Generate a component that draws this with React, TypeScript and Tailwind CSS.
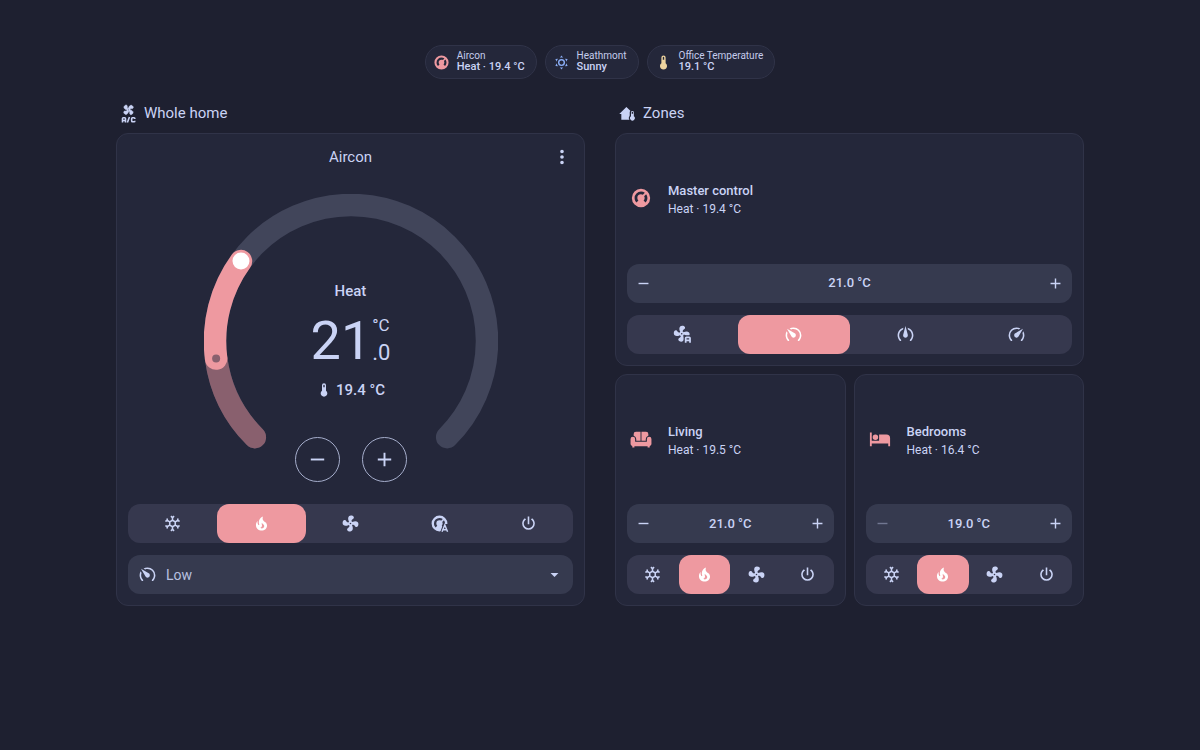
import type { ReactNode } from "react";
import clsx from "clsx";

const FAN =
  "M12,11A1,1 0 0,0 11,12A1,1 0 0,0 12,13A1,1 0 0,0 13,12A1,1 0 0,0 12,11M12.5,2C17,2 17.11,5.57 14.75,6.75C13.76,7.24 13.32,8.29 13.13,9.22C13.61,9.42 14.03,9.73 14.35,10.13C18.05,8.13 22.03,8.92 22.03,12.5C22.03,17 18.46,17.1 17.28,14.73C16.78,13.74 15.72,13.3 14.79,13.11C14.59,13.59 14.28,14 13.88,14.34C15.87,18.03 15.08,22 11.5,22C7,22 6.91,18.42 9.27,17.24C10.25,16.75 10.69,15.71 10.89,14.79C10.4,14.59 9.97,14.27 9.65,13.87C5.96,15.85 2,15.07 2,11.5C2,7 5.56,6.89 6.74,9.26C7.24,10.25 8.29,10.68 9.22,10.87C9.41,10.39 9.73,9.97 10.14,9.65C8.15,5.96 8.94,2 12.5,2Z";

const THERMOSTAT =
  "M16.95,16.95L14.83,14.83C15.55,14.1 16,13.1 16,12C16,11.26 15.79,10.57 15.43,10L17.6,7.81C18.5,9 19,10.43 19,12C19,13.93 18.22,15.68 16.95,16.95M12,5C13.57,5 15,5.5 16.19,6.4L14,8.56C13.43,8.21 12.74,8 12,8A4,4 0 0,0 8,12C8,13.1 8.45,14.1 9.17,14.83L7.05,16.95C5.78,15.68 5,13.93 5,12A7,7 0 0,1 12,5M12,2A10,10 0 0,0 2,12A10,10 0 0,0 12,22A10,10 0 0,0 22,12A10,10 0 0,0 12,2Z";

const SPEEDOMETER =
  "M12,16A3,3 0 0,1 9,13C9,11.88 9.61,10.9 10.5,10.39L20.21,4.77L14.68,14.35C14.18,15.33 13.17,16 12,16M12,3C13.81,3 15.5,3.5 16.97,4.32L14.87,5.53C14,5.19 13,5 12,5A8,8 0 0,0 4,13C4,15.21 4.89,17.21 6.34,18.65H6.35C6.74,19.04 6.74,19.67 6.35,20.06C5.96,20.45 5.32,20.45 4.93,20.07V20.07C3.12,18.26 2,15.76 2,13A10,10 0 0,1 12,3M22,13C22,15.76 20.88,18.26 19.07,20.07V20.07C18.68,20.45 18.05,20.45 17.66,20.06C17.27,19.67 17.27,19.04 17.66,18.65V18.65C19.11,17.2 20,15.21 20,13C20,12 19.81,11 19.46,10.1L20.67,8C21.5,9.5 22,11.18 22,13Z";

const paths = {
  minus: "M19,13H5V11H19V13Z",
  plus: "M19,13H13V19H11V13H5V11H11V5H13V11H19V13Z",
  dots: "M12,16A2,2 0 0,1 14,18A2,2 0 0,1 12,20A2,2 0 0,1 10,18A2,2 0 0,1 12,16M12,10A2,2 0 0,1 14,12A2,2 0 0,1 12,14A2,2 0 0,1 10,12A2,2 0 0,1 12,10M12,4A2,2 0 0,1 14,6A2,2 0 0,1 12,8A2,2 0 0,1 10,6A2,2 0 0,1 12,4Z",
  caret: "M7,10L12,15L17,10H7Z",
  cool: "M20.79,13.95L18.46,14.57L16.46,13.44V10.56L18.46,9.43L20.79,10.05L21.31,8.12L19.54,7.65L20,5.88L18.07,5.36L17.45,7.69L15.45,8.82L13,7.38V5.12L14.71,3.41L13.29,2L12,3.29L10.71,2L9.29,3.41L11,5.12V7.38L8.5,8.82L6.5,7.69L5.92,5.36L4,5.88L4.47,7.65L2.7,8.12L3.22,10.05L5.55,9.43L7.55,10.56V13.45L5.55,14.58L3.22,13.96L2.7,15.89L4.47,16.36L4,18.12L5.93,18.64L6.55,16.31L8.55,15.18L11,16.62V18.88L9.29,20.59L10.71,22L12,20.71L13.29,22L14.7,20.59L13,18.88V16.62L15.5,15.17L17.5,16.3L18.12,18.63L20,18.12L19.53,16.35L21.3,15.88L20.79,13.95M9.5,10.56L12,9.11L14.5,10.56V13.44L12,14.89L9.5,13.44V10.56Z",
  heat: "M17.66 11.2C17.43 10.9 17.15 10.64 16.89 10.38C16.22 9.78 15.46 9.35 14.82 8.72C13.33 7.26 13 4.85 13.95 3C13 3.23 12.17 3.75 11.46 4.32C8.87 6.4 7.85 10.07 9.07 13.22C9.11 13.32 9.15 13.42 9.15 13.55C9.15 13.77 9 13.97 8.8 14.05C8.57 14.15 8.33 14.09 8.14 13.93C8.08 13.88 8.04 13.83 8 13.76C6.87 12.33 6.69 10.28 7.45 8.64C5.78 10 4.87 12.3 5 14.47C5.06 14.97 5.12 15.47 5.29 15.97C5.43 16.57 5.7 17.17 6 17.7C7.08 19.43 8.95 20.67 10.96 20.92C13.1 21.19 15.39 20.8 17.03 19.32C18.86 17.66 19.5 15 18.56 12.72L18.43 12.46C18.22 12 17.66 11.2 17.66 11.2M14.5 17.5C14.22 17.74 13.76 18 13.4 18.1C12.28 18.5 11.16 17.94 10.5 17.28C11.69 17 12.4 16.12 12.61 15.23C12.78 14.43 12.46 13.77 12.33 13C12.21 12.26 12.23 11.63 12.5 10.94C12.69 11.32 12.89 11.7 13.13 12C13.9 13 15.11 13.44 15.37 14.8C15.41 14.94 15.43 15.08 15.43 15.23C15.46 16.05 15.1 16.95 14.5 17.5H14.5Z",
  fan: FAN,
  power:
    "M16.56,5.44L15.11,6.89C16.84,7.94 18,9.83 18,12A6,6 0 0,1 12,18A6,6 0 0,1 6,12C6,9.83 7.16,7.94 8.88,6.88L7.44,5.44C5.36,6.88 4,9.28 4,12A8,8 0 0,0 12,20A8,8 0 0,0 20,12C20,9.28 18.64,6.88 16.56,5.44M13,3H11V13H13",
  thermometer:
    "M15 13V5A3 3 0 0 0 9 5V13A5 5 0 1 0 15 13M12 4A1 1 0 0 1 13 5V8H11V5A1 1 0 0 1 12 4Z",
  bed: "M19,7H11V14H3V5H1V20H3V17H21V20H23V11A4,4 0 0,0 19,7M7,13A3,3 0 0,0 10,10A3,3 0 0,0 7,7A3,3 0 0,0 4,10A3,3 0 0,0 7,13Z",
  sun: "M12,7A5,5 0 0,1 17,12A5,5 0 0,1 12,17A5,5 0 0,1 7,12A5,5 0 0,1 12,7M12,9A3,3 0 0,0 9,12A3,3 0 0,0 12,15A3,3 0 0,0 15,12A3,3 0 0,0 12,9M12,2L14.39,5.42C13.65,5.15 12.84,5 12,5C11.16,5 10.35,5.15 9.61,5.42L12,2M3.34,7L7.5,6.65C6.9,7.16 6.36,7.78 5.94,8.5C5.5,9.24 5.25,10 5.11,10.79L3.34,7M3.36,17L5.12,13.23C5.26,14 5.53,14.78 5.95,15.5C6.37,16.24 6.91,16.86 7.5,17.37L3.36,17M20.65,7L18.88,10.79C18.74,10 18.47,9.23 18.05,8.5C17.63,7.78 17.1,7.15 16.5,6.64L20.65,7M20.64,17L16.5,17.36C17.09,16.85 17.62,16.22 18.04,15.5C18.46,14.77 18.73,14 18.87,13.21L20.64,17M12,22L9.59,18.56C10.33,18.83 11.14,19 12,19C12.82,19 13.63,18.83 14.37,18.56L12,22Z",
  thermostat: THERMOSTAT,
  fanHigh: SPEEDOMETER,
  fanMedium:
    "M12 1.38L9.14 12.06C8.8 13.1 9.04 14.29 9.86 15.12C11.04 16.29 12.94 16.29 14.11 15.12C14.9 14.33 15.16 13.2 14.89 12.21M14.6 3.35L15.22 5.68C18.04 6.92 20 9.73 20 13C20 15.21 19.11 17.21 17.66 18.65H17.65C17.26 19.04 17.26 19.67 17.65 20.06C18.04 20.45 18.68 20.45 19.07 20.07C20.88 18.26 22 15.76 22 13C22 8.38 18.86 4.5 14.6 3.35M9.4 3.36C5.15 4.5 2 8.4 2 13C2 15.76 3.12 18.26 4.93 20.07C5.32 20.45 5.95 20.45 6.34 20.06C6.73 19.67 6.73 19.04 6.34 18.65C4.89 17.2 4 15.21 4 13C4 9.65 5.94 6.86 8.79 5.65",
  sofa: "M6.5,4H11.5V13.8H6.8V12A3.9,3.9 0 0,0 4,8.4V6.5A2.5,2.5 0 0,1 6.5,4M12.5,4H17.5A2.5,2.5 0 0,1 20,6.5V8.4A3.9,3.9 0 0,0 17.2,12V13.8H12.5V4M3.1,9.5A2.5,2.5 0 0,1 5.6,12V15H18.4V12A2.5,2.5 0 0,1 23.4,12V17.5A2.3,2.3 0 0,1 21.5,19.7V21.3H19.2V20H4.8V21.3H2.5V19.7A2.3,2.3 0 0,1 .6,17.5V12A2.5,2.5 0 0,1 3.1,9.5Z",
};

type PathName = keyof typeof paths;

function Svg({ className, children }: { className: string; children: ReactNode }) {
  return (
    <svg viewBox="0 0 24 24" fill="currentColor" aria-hidden="true" className={clsx("shrink-0", className)}>
      {children}
    </svg>
  );
}

function Icon({ name, className = "size-[19px]" }: { name: PathName; className?: string }) {
  return (
    <Svg className={className}>
      <path d={paths[name]} />
    </Svg>
  );
}

function SlowIcon() {
  return (
    <Svg className="size-[19px]">
      <path d={SPEEDOMETER} transform="matrix(-1 0 0 1 24 0)" />
    </Svg>
  );
}

function FanAutoIcon() {
  return (
    <Svg className="size-[19px]">
      <mask id="fan-auto">
        <rect width="24" height="24" fill="white" />
        <path d="M14.4,24V15.5A1.5,1.5 0 0,1 15.9,14H24V24Z" fill="black" />
      </mask>
      <path d={FAN} mask="url(#fan-auto)" transform="translate(-1 -1)" />
      <path
        d="M16,22.5V16.5A1,1 0 0,1 17,15.5H20.5A1,1 0 0,1 21.5,16.5V22.5M16,19.5H21.5"
        fill="none"
        stroke="currentColor"
        strokeWidth="2.2"
      />
    </Svg>
  );
}

function ThermostatAutoIcon() {
  return (
    <Svg className="size-[19px]">
      <mask id="thermostat-auto">
        <rect width="24" height="24" fill="white" />
        <path d="M12.5,24L16.6,12.5H24V24Z" fill="black" />
      </mask>
      <path d={THERMOSTAT} mask="url(#thermostat-auto)" />
      <path d="M15.2,22.5L18.7,13.8L22.2,22.5M16.4,19.8H21" fill="none" stroke="currentColor" strokeWidth="1.8" />
    </Svg>
  );
}

function AirConIcon() {
  return (
    <Svg className="size-[19px]">
      <path
        d={FAN}
        stroke="currentColor"
        strokeWidth="1"
        transform="translate(12 7.4) rotate(40) scale(.7) translate(-12 -12)"
      />
      <path
        d="M4.4,23.4V18.4A1,1 0 0,1 5.4,17.4H7.2A1,1 0 0,1 8.2,18.4V23.4M4.4,20.8H8.2M10.6,23.4L13.2,16.4M20,18.8V18.4A1,1 0 0,0 19,17.4H17A1,1 0 0,0 16,18.4V21.4A1,1 0 0,0 17,22.4H19A1,1 0 0,0 20,21.4V21"
        fill="none"
        stroke="currentColor"
        strokeWidth="2"
      />
    </Svg>
  );
}

function HomeThermometerIcon() {
  return (
    <Svg className="size-[19px]">
      <path d="M1.6,12.6L10.6,3.8L15.6,8.4A3.4,3.4 0 0,0 14.8,11V14.6A5,5 0 0,0 14.4,20H4.2V12.6Z" />
      <path d="M20,15.6V10.6A1.8,1.8 0 0,0 16.4,10.6V15.6A3,3 0 1,0 20,15.6M18.2,9.8A.9,.9 0 0,1 19.1,10.7V12.4H17.3V10.7A.9,.9 0 0,1 18.2,9.8Z" />
    </Svg>
  );
}

function Chip({ icon, title, value }: { icon: ReactNode; title: string; value: string }) {
  return (
    <button
      type="button"
      className="flex h-[34px] items-center gap-[7px] rounded-full border border-[#303348] bg-[#24273a] pr-[11px] pl-[7px] text-left"
    >
      {icon}
      <span className="flex flex-col pb-0.5">
        <span className="text-[10px] leading-[11px] text-[#c4ccec]">{title}</span>
        <span className="text-[11px] leading-3 font-medium">{value}</span>
      </span>
    </button>
  );
}

type Option = { label: string; icon: ReactNode };

function Segments({ label, options, active }: { label: string; options: Option[]; active: string }) {
  return (
    <div role="group" aria-label={label} className="flex h-[39px] rounded-xl bg-[#36384e]">
      {options.map((option) => {
        const selected = option.label === active;
        return (
          <button
            key={option.label}
            type="button"
            aria-label={option.label}
            aria-pressed={selected}
            className={clsx("flex flex-1 items-center justify-center rounded-xl", selected && "bg-[#ee99a0] text-white")}
          >
            {option.icon}
          </button>
        );
      })}
    </div>
  );
}

function Stepper({ value, atMin = false }: { value: string; atMin?: boolean }) {
  return (
    <div className="flex h-[39px] items-center justify-between rounded-xl bg-[#363a4f]">
      <button
        type="button"
        aria-label="Decrease"
        disabled={atMin}
        className="flex h-full w-[33px] items-center justify-center disabled:opacity-40"
      >
        <Icon name="minus" className="size-[17px]" />
      </button>
      <span className="text-[13px] leading-5 font-medium">{value}</span>
      <button type="button" aria-label="Increase" className="flex h-full w-[33px] items-center justify-center">
        <Icon name="plus" className="size-[17px]" />
      </button>
    </div>
  );
}

function Tile({
  icon,
  title,
  state,
  className,
  children,
}: {
  icon: PathName;
  title: string;
  state: string;
  className?: string;
  children: ReactNode;
}) {
  return (
    <section
      className={clsx("flex flex-col gap-3 rounded-xl border border-[#303348] bg-[#24273a] p-[11px]", className)}
    >
      <div className="flex flex-1 items-center gap-4 pl-[3px]">
        <Icon name={icon} className="size-[22px] text-[#ee99a0]" />
        <div className="pt-1">
          <h3 className="text-[13px] leading-[18px] font-medium">{title}</h3>
          <p className="text-xs leading-[18px]">{state}</p>
        </div>
      </div>
      {children}
    </section>
  );
}

const roomModes: Option[] = [
  { label: "Cool", icon: <Icon name="cool" /> },
  { label: "Heat", icon: <Icon name="heat" /> },
  { label: "Fan only", icon: <Icon name="fan" /> },
  { label: "Off", icon: <Icon name="power" /> },
];

const homeModes: Option[] = [
  ...roomModes.slice(0, 3),
  { label: "Heat/Cool", icon: <ThermostatAutoIcon /> },
  roomModes[3],
];

const fanModes: Option[] = [
  { label: "Auto", icon: <FanAutoIcon /> },
  { label: "Low", icon: <SlowIcon /> },
  { label: "Medium", icon: <Icon name="fanMedium" /> },
  { label: "High", icon: <Icon name="fanHigh" /> },
];

// point on the dial, angle in degrees clockwise from 3 o'clock
const R = 136;
function point(angle: number) {
  const rad = (angle * Math.PI) / 180;
  return { x: 147 + R * Math.cos(rad), y: 147 + R * Math.sin(rad) };
}

function arc(from: number, to: number) {
  const a = point(from);
  const b = point(to);
  return `M${a.x},${a.y}A${R},${R} 0 ${to - from > 180 ? 1 : 0} 1 ${b.x},${b.y}`;
}

function Dial() {
  const current = point(172.6);
  const target = point(216);
  return (
    <div className="grid justify-center">
      <svg
        viewBox="0 0 294 294"
        fill="none"
        strokeWidth="22.5"
        strokeLinecap="round"
        aria-hidden="true"
        className="size-[294px] [grid-area:1/1]"
      >
        <path d={arc(135, 405)} stroke="#41455a" />
        <path d={arc(135, 172.6)} stroke="#89606e" />
        <path d={arc(172.6, 216)} stroke="#ee99a0" />
        <circle cx={current.x} cy={current.y} r="4" fill="#89606e" />
        <circle cx={target.x} cy={target.y} r="8.5" fill="#fff" />
      </svg>
      <div className="flex flex-col items-center pt-[87px] [grid-area:1/1]">
        <p className="text-[15px] leading-5 font-medium">Heat</p>
        <p className="mt-3 flex h-14 items-center gap-px">
          <span className="text-[54px] leading-[56px]">21</span>
          <span className="flex flex-col">
            <span className="text-[17px] leading-6">°C</span>
            <span className="text-[22px] leading-8">.0</span>
          </span>
        </p>
        <p className="mt-[11px] flex items-center gap-1 text-[15px] leading-5 font-medium">
          <Icon name="thermometer" className="size-4" />
          19.4 °C
        </p>
        <div className="mt-[37px] flex gap-[22px]">
          <button
            type="button"
            aria-label="Decrease temperature"
            className="flex size-[45px] items-center justify-center rounded-full border border-[#a5adcb]"
          >
            <Icon name="minus" className="size-[23px]" />
          </button>
          <button
            type="button"
            aria-label="Increase temperature"
            className="flex size-[45px] items-center justify-center rounded-full border border-[#a5adcb]"
          >
            <Icon name="plus" className="size-[23px]" />
          </button>
        </div>
      </div>
    </div>
  );
}

function AirconCard() {
  return (
    <section className="flex flex-col gap-3 rounded-xl border border-[#303348] bg-[#24273a] p-[11px]">
      <div className="pb-1">
        <div className="mb-[25px] grid grid-cols-[22px_1fr_22px] items-center">
          <h3 className="col-start-2 text-center text-[15px] leading-6">Aircon</h3>
          <button type="button" aria-label="More options">
            <Icon name="dots" className="size-[22px]" />
          </button>
        </div>
        <Dial />
      </div>
      <Segments label="Mode" options={homeModes} active="Heat" />
      <label className="flex h-[39px] items-center gap-[9px] rounded-xl bg-[#363a4f] pr-[9px] pl-[10px]">
        <SlowIcon />
        <select
          aria-label="Fan speed"
          defaultValue="Low"
          className="flex-1 appearance-none bg-transparent text-sm text-[#b8c0e0] outline-none"
        >
          <option>Auto</option>
          <option>Low</option>
          <option>Medium</option>
          <option>High</option>
        </select>
        <Icon name="caret" />
      </label>
    </section>
  );
}

export default function App() {
  return (
    <div className="min-h-screen bg-[#1e2030] px-4 pt-[45px] pb-10 font-['Roboto',sans-serif] text-[#cad3f5]">
      <header className="flex flex-wrap justify-center gap-2">
        <Chip
          icon={<Icon name="thermostat" className="size-[17px] text-[#ee99a0]" />}
          title="Aircon"
          value="Heat · 19.4 °C"
        />
        <Chip icon={<Icon name="sun" className="size-[17px] text-[#8aadf4]" />} title="Heathmont" value="Sunny" />
        <Chip
          icon={<Icon name="thermometer" className="size-[17px] text-[#eed49f]" />}
          title="Office Temperature"
          value="19.1 °C"
        />
      </header>

      <main className="mx-auto mt-[22px] grid max-w-[968px] grid-cols-2 gap-[30px]">
        <div>
          <h2 className="mb-2 flex items-center gap-[6px] pl-[3px] text-[15px] leading-6">
            <AirConIcon />
            Whole home
          </h2>
          <AirconCard />
        </div>

        <div className="flex flex-col">
          <h2 className="mb-2 flex items-center gap-[6px] pl-[3px] text-[15px] leading-6">
            <HomeThermometerIcon />
            Zones
          </h2>
          <div className="grid flex-1 grid-cols-2 grid-rows-2 gap-2">
            <Tile icon="thermostat" title="Master control" state="Heat · 19.4 °C" className="col-span-2">
              <Stepper value="21.0 °C" />
              <Segments label="Fan speed" options={fanModes} active="Low" />
            </Tile>
            <Tile icon="sofa" title="Living" state="Heat · 19.5 °C">
              <Stepper value="21.0 °C" />
              <Segments label="Living mode" options={roomModes} active="Heat" />
            </Tile>
            <Tile icon="bed" title="Bedrooms" state="Heat · 16.4 °C">
              <Stepper value="19.0 °C" atMin />
              <Segments label="Bedrooms mode" options={roomModes} active="Heat" />
            </Tile>
          </div>
        </div>
      </main>
    </div>
  );
}
